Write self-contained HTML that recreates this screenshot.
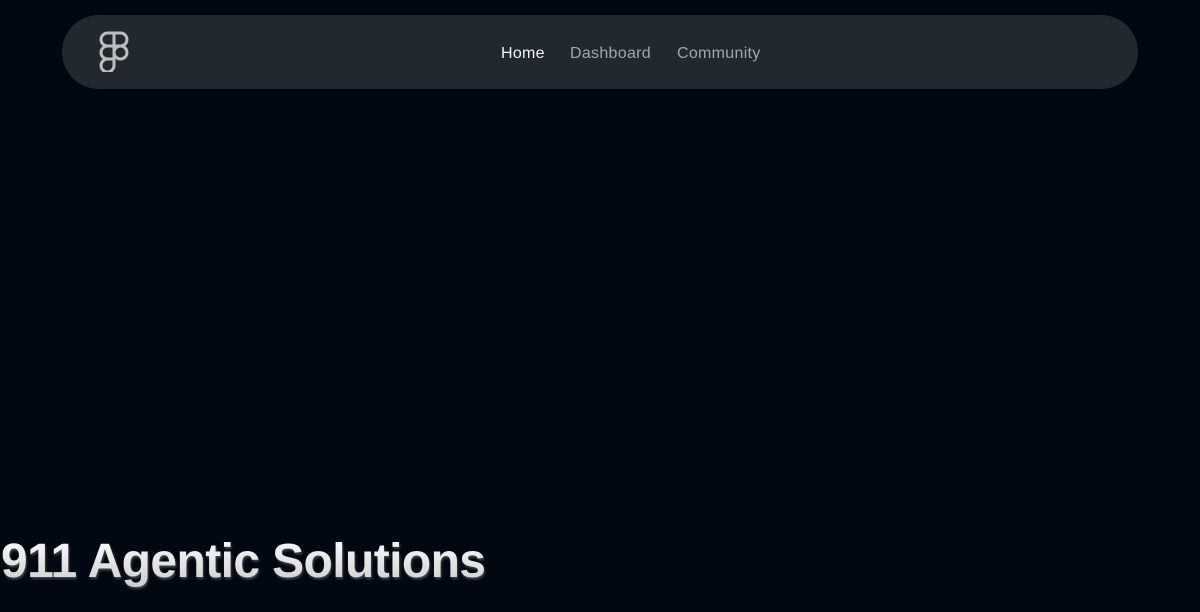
<!DOCTYPE html>
<html><head><style>
html,body{margin:0;padding:0;width:1200px;height:612px;background:#020812;overflow:hidden;font-family:"Liberation Sans",sans-serif}
.nav{position:absolute;left:62px;top:15px;width:1076px;height:74px;border-radius:37px;background:#22282f}
.links{position:absolute;top:45px;left:501px;font-size:16px;color:#a3a7ad;white-space:nowrap;letter-spacing:0.3px}
.links span{position:absolute;top:0}
h1{position:absolute;left:1px;top:534px;margin:0;font-size:48px;font-weight:bold;letter-spacing:-0.6px;white-space:nowrap;color:#eee;
background:linear-gradient(#fff,#ccc);-webkit-background-clip:text;background-clip:text;-webkit-text-fill-color:transparent;filter:drop-shadow(1px 2px 1px rgba(255,255,255,0.25))}
</style></head><body>
<div class="nav"></div>
<svg style="position:absolute;left:99px;top:31px" width="30" height="41" viewBox="0 0 30 41" fill="none" stroke="#bdbdbd" stroke-width="3">
<path d="M15 2H8.5a6.5 6.5 0 0 0 0 13H15Z"/>
<path d="M15 2h6.5a6.5 6.5 0 0 1 0 13H15Z"/>
<path d="M15 15H8.5a6.5 6.5 0 0 0 0 13H15Z"/>
<circle cx="21.5" cy="21.5" r="6.5"/>
<path d="M8.5 28H15v6.5a6.5 6.5 0 1 1-6.5-6.5Z"/>
</svg>
<div class="links"><span style="left:0;color:#f2f3f4">Home</span><span style="left:69px">Dashboard</span><span style="left:176px">Community</span></div>
<h1>911 Agentic Solutions</h1>
</body></html>
